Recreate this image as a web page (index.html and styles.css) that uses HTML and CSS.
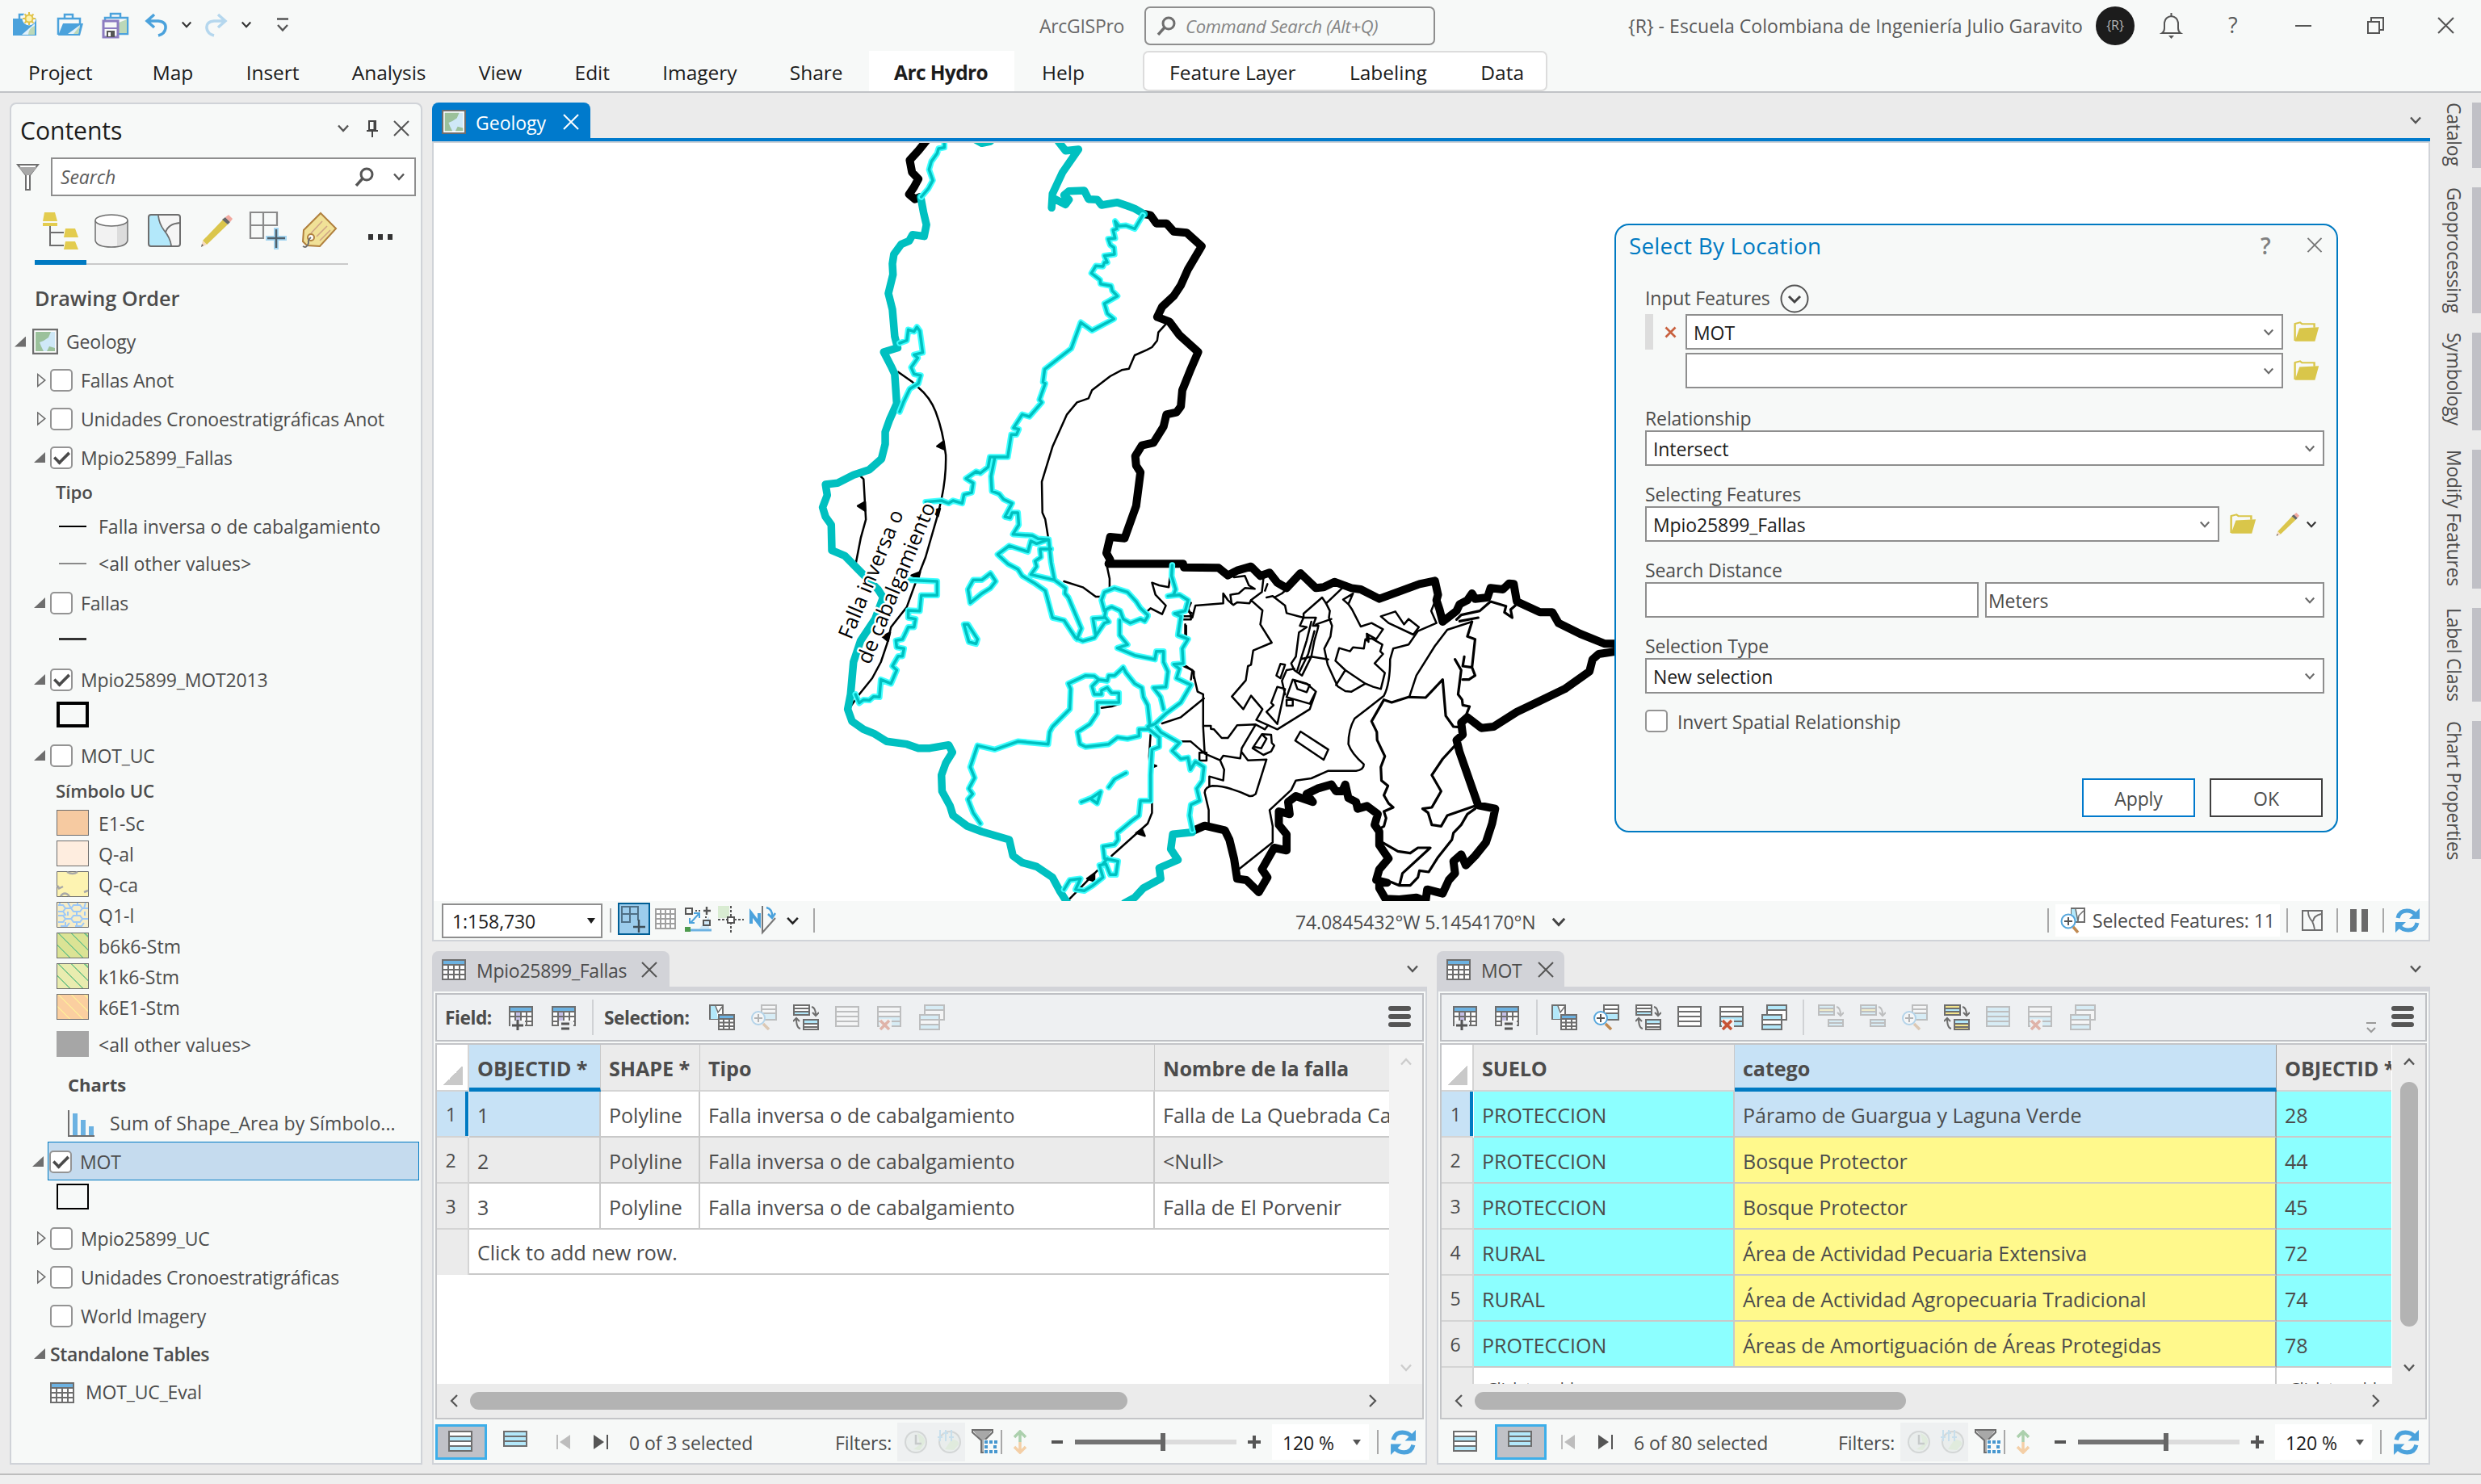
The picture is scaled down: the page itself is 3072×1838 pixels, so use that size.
FILE: index.html
```html
<!DOCTYPE html>
<html lang="en">
<head>
<meta charset="utf-8">
<title>ArcGISPro</title>
<link rel="stylesheet" href="styles.css">
</head>
<body>
<svg class="defs" width="0" height="0" aria-hidden="true">
  <defs>
    <symbol id="chev" viewBox="0 0 16 10"><path d="M2 1.5 8 8 14 1.5" fill="none" stroke="currentColor" stroke-width="2.4"/></symbol>
    <symbol id="x" viewBox="0 0 20 20"><path d="M1 1 19 19M19 1 1 19" fill="none" stroke="currentColor" stroke-width="2"/></symbol>
    <symbol id="xb" viewBox="0 0 20 20"><path d="M2 2 18 18M18 2 2 18" fill="none" stroke="currentColor" stroke-width="3.6"/></symbol>
    <symbol id="caret" viewBox="0 0 10 7"><path d="M0 0H10L5 7Z" fill="currentColor"/></symbol>
    <symbol id="mag" viewBox="0 0 24 24"><circle cx="15" cy="9" r="7" fill="none" stroke="currentColor" stroke-width="3"/><path d="M10 14 2 23" stroke="currentColor" stroke-width="3.4"/></symbol>
    <symbol id="mapico" viewBox="0 0 32 32"><path d="M1 1H31V31H1Z" fill="#fff" stroke="#6e6e6e" stroke-width="2.5"/><path d="M4 4H28V28H4Z" fill="#cfe8f7"/><path d="M4 4H23L20 11 14 15 9 17 11 22 14 28H4ZM18 28 21 22 28 24V28Z" fill="#9bc19b"/></symbol>
    <symbol id="open" viewBox="0 0 40 40"><path d="M1 5 10 2 13 5H32V12M2 5V37" fill="none" stroke="#d9c64a" stroke-width="3"/><path d="M9 13 39 11 33 38H2Z" fill="#d9c64a"/></symbol>
    <symbol id="pencil" viewBox="0 0 40 40"><path d="M3 32 28 6 34 12 8 37Z" fill="#dbc64c"/><path d="M3 32 1 40 8 37Z" fill="#f6d9bd"/><path d="M1 40 2 36 4 38Z" fill="#666"/><path d="M27 6 31 3 37 9 34 12Z" fill="#666"/><path d="M31 3 35 0 40 5 37 9Z" fill="#f2a9a0"/></symbol>
    <symbol id="tbl" viewBox="0 0 30 26"><path d="M1 1H29V25H1Z" fill="#fff"/><path d="M1 1H29V7H1Z" fill="#6cb2e2"/><path d="M1 1H29V25H1ZM1 7H29M1 13H29M1 19H29M8 7V25M15 7V25M22 7V25" fill="none" stroke="#6e6e6e" stroke-width="2"/></symbol>
    <symbol id="fieldadd" viewBox="0 0 32 32"><path d="M1 3H29V26H1Z" fill="#fff"/><path d="M8 9H14V20H8Z" fill="#c5bfe6"/><path d="M1 3H29V9H1Z" fill="#6cb2e2"/><path d="M1 3H29V26H1ZM1 9H29M1 15H29M1 21H29M8 9V26M15 9V26M22 9V26" fill="none" stroke="#6e6e6e" stroke-width="2"/><path d="M2 20H20V32H2Z" fill="#eef0f2"/><path d="M4 26H18M11 19V32" stroke="#555" stroke-width="3"/></symbol>
    <symbol id="fieldcalc" viewBox="0 0 32 32"><path d="M1 3H29V26H1Z" fill="#fff"/><path d="M8 9H14V20H8Z" fill="#c5bfe6"/><path d="M1 3H29V9H1Z" fill="#6cb2e2"/><path d="M1 3H29V26H1ZM1 9H29M1 15H29M1 21H29M8 9V26M15 9V26M22 9V26" fill="none" stroke="#6e6e6e" stroke-width="2"/><path d="M9 20H27V32H9Z" fill="#eef0f2"/><path d="M12 24H22M12 30H22" stroke="#555" stroke-width="3"/></symbol>
    <symbol id="selattr" viewBox="0 0 32 32"><path d="M1 1H17V18H1Z" fill="#fff" stroke="#6e6e6e" stroke-width="2"/><path d="M2 2H8L11 18H2Z" fill="#b3e8fa"/><path d="M8 2 11 10 17 2" fill="none" stroke="#6e6e6e" stroke-width="1.5"/><path d="M11 12H31V31H11Z" fill="#fff"/><path d="M12 13H31V18H12Z" fill="#6cb2e2"/><path d="M12 13H31V31H12ZM12 18H31M12 22.500H31M12 27H31M18 18V31M25 18V31" fill="none" stroke="#6e6e6e" stroke-width="2"/></symbol>
    <symbol id="selzoom" viewBox="0 0 32 32"><path d="M13 1H31V19H13Z" fill="#fff" stroke="#6e6e6e" stroke-width="2"/><path d="M14 12H30V18H14Z" fill="#b3e8fa"/><path d="M13 6H31M13 11H31" stroke="#6e6e6e" stroke-width="2"/><circle cx="9" cy="17" r="8" fill="#fff" stroke="#55a6dc" stroke-width="2"/><path d="M9 12V22M4 17H14" stroke="#555" stroke-width="2"/><path d="M15 24 22 31" stroke="#c08a52" stroke-width="3.500"/></symbol>
    <symbol id="selswitch" viewBox="0 0 32 32"><path d="M1 1H20V13H1Z" fill="#fff" stroke="#6e6e6e" stroke-width="2"/><path d="M2 9H19V12H2Z" fill="#b3e8fa"/><path d="M1 5H20M1 9H20" stroke="#6e6e6e" stroke-width="2"/><path d="M13 19H31V31H13Z" fill="#fff" stroke="#6e6e6e" stroke-width="2"/><path d="M14 20H30V23H14Z" fill="#b3e8fa"/><path d="M13 24H31M13 28H31" stroke="#6e6e6e" stroke-width="2"/><path d="M23 3Q28 4 28 13M24 10 28 14 32 10M9 30Q4 29 4 18M0 21 4 17 8 21" fill="none" stroke="#6e6e6e" stroke-width="2"/></symbol>
    <symbol id="selyellow" viewBox="0 0 32 32"><path d="M1 1H20V13H1Z" fill="#f4e58c" stroke="#6e6e6e" stroke-width="2"/><path d="M2 6H19V9H2Z" fill="#b3e8fa"/><path d="M13 19H31V31H13Z" fill="#b3e8fa" stroke="#6e6e6e" stroke-width="2"/><path d="M14 25H30V30H14Z" fill="#f4e58c"/><path d="M1 5H20M1 9H20M13 24H31M13 28H31" stroke="#6e6e6e" stroke-width="2"/><path d="M23 3Q28 4 28 13M24 10 28 14 32 10M9 30Q4 29 4 18M0 21 4 17 8 21" fill="none" stroke="#6e6e6e" stroke-width="2"/></symbol>
    <symbol id="selre" viewBox="0 0 32 32"><path d="M1 1H20V13H1Z" fill="#b3e8fa" stroke="#6e6e6e" stroke-width="2"/><path d="M2 6H19V9H2Z" fill="#f4e58c"/><path d="M13 19H31V27H13Z" fill="#b3e8fa" stroke="#6e6e6e" stroke-width="2"/><path d="M1 5H20M1 9H20M13 23H31" stroke="#6e6e6e" stroke-width="2"/><path d="M23 3Q28 4 28 13M24 10 28 14 32 10" fill="none" stroke="#6e6e6e" stroke-width="2"/></symbol>
    <symbol id="rows" viewBox="0 0 32 32"><path d="M1 3H29V27H1Z" fill="#fff"/><path d="M1 3H29V27H1ZM1 9H29M1 15H29M1 21H29" fill="none" stroke="#6e6e6e" stroke-width="2"/></symbol>
    <symbol id="rowsblue" viewBox="0 0 32 32"><path d="M1 3H29V27H1ZM1 9H29M1 15H29M1 21H29" fill="#b3e8fa" stroke="#6e6e6e" stroke-width="2"/></symbol>
    <symbol id="rowsdel" viewBox="0 0 32 32"><path d="M1 3H29V27H1Z" fill="#fff"/><path d="M1 15H29V27H1Z" fill="#b3e8fa"/><path d="M1 3H29V27H1ZM1 9H29M1 15H29M1 21H29" fill="none" stroke="#6e6e6e" stroke-width="2"/><path d="M3 18H18V32H3Z" fill="#eef0f2"/><path d="M4 20 15 31M15 20 4 31" stroke="#c75335" stroke-width="3.500"/></symbol>
    <symbol id="rowscopy" viewBox="0 0 32 32"><path d="M7 1H31V19H7Z" fill="#fff" stroke="#6e6e6e" stroke-width="2"/><path d="M8 2H30V6H8Z" fill="#b3e8fa"/><path d="M7 7H31" stroke="#6e6e6e" stroke-width="2"/><path d="M1 13H25V31H1Z" fill="#fff"/><path d="M1 13H25V19H1ZM1 25H25V31H1Z" fill="#b3e8fa"/><path d="M1 13H25V31H1ZM1 19H25M1 25H25" fill="none" stroke="#6e6e6e" stroke-width="2"/></symbol>
    <symbol id="ham" viewBox="0 0 28 26"><path d="M3 3H25M3 13H25M3 23H25" stroke="#555" stroke-width="6" stroke-linecap="round"/></symbol>
    <symbol id="allrows" viewBox="0 0 30 26"><path d="M1 1H29V25H1Z" fill="#fff"/><path d="M1 7H29V13H1ZM1 19H29V25H1Z" fill="#b3e8fa"/><path d="M1 1H29V25H1ZM1 7H29M1 13H29M1 19H29" fill="none" stroke="#6e6e6e" stroke-width="2"/></symbol>
    <symbol id="selrows" viewBox="0 0 30 26"><path d="M1 1H29V19H1ZM1 7H29M1 13H29" fill="#b3e8fa" stroke="#6e6e6e" stroke-width="2"/></symbol>
    <symbol id="first" viewBox="0 0 18 18"><path d="M1 0V18" stroke="#bdbdbd" stroke-width="2"/><path d="M17 0V18L4 9Z" fill="#bdbdbd"/></symbol>
    <symbol id="next" viewBox="0 0 18 18"><path d="M17 0V18" stroke="#555" stroke-width="2"/><path d="M0 0V18L13 9Z" fill="#555"/></symbol>
    <symbol id="clock" viewBox="0 0 30 30"><circle cx="15" cy="15" r="13" fill="#e9edec" stroke="#d3d6d6" stroke-width="2"/><path d="M17 4Q27 8 26 16L20 25 12 24 20 18Z" fill="#e0ebdd"/><path d="M15 6V17H22" fill="none" stroke="#c6caca" stroke-width="2.500"/></symbol>
    <symbol id="range" viewBox="0 0 30 30"><circle cx="15" cy="15" r="13" fill="#e9edec" stroke="#d3d6d6" stroke-width="2"/><path d="M17 12Q27 12 26 18L20 25 9 24Z" fill="#e0ebdd"/><path d="M3 0V14M10 0V14M17 0V14M0 9H6M7 4H13M14 9H20" stroke="#c8dfec" stroke-width="2"/></symbol>
    <symbol id="filttab" viewBox="0 0 32 32"><path d="M1 1H26L16 14V30H12V14Z" fill="#a8a8a8"/><path d="M1 1H26V4L16 14V29H12V14L1 4Z" fill="none" stroke="#6e6e6e" stroke-width="2"/><path d="M15 13H32V32H15Z" fill="#f7f9f8"/><path d="M16 16H32M16 22H20M27 22H32M16 28H32" stroke="#4797cf" stroke-width="4" stroke-dasharray="4 2"/></symbol>
    <symbol id="updown" viewBox="0 0 18 30"><path d="M9 15V3M2 9 9 2 16 9" fill="none" stroke="#acd0ad" stroke-width="3.500"/><path d="M9 15V27M2 21 9 28 16 21" fill="none" stroke="#f4cfa6" stroke-width="3.500"/></symbol>
    <symbol id="refresh" viewBox="0 0 32 32"><path d="M4 13Q6 4 15 4 22 4 26 9" fill="none" stroke="#4ba2dc" stroke-width="5"/><path d="M31 1V14H18Z" fill="#4ba2dc"/><path d="M28 19Q26 28 17 28 10 28 6 23" fill="none" stroke="#4ba2dc" stroke-width="5"/><path d="M1 31V18H14Z" fill="#4ba2dc"/></symbol>
    <symbol id="zoomsel" viewBox="0 0 32 32"><path d="M14 1H30V18H14Z" fill="#fff" stroke="#6e6e6e" stroke-width="2"/><path d="M14 2H20L22 17H14Z" fill="#b3e8fa"/><path d="M19 2 22 17 23 10 29 4" fill="none" stroke="#6e6e6e" stroke-width="1.500"/><circle cx="10" cy="17" r="8.500" fill="#fff" stroke="#55a6dc" stroke-width="2"/><path d="M10 12V22M5 17H15" stroke="#555" stroke-width="2"/><path d="M16 24 22 31" stroke="#c08a52" stroke-width="3.500"/></symbol>
  </defs>
</svg>

<div class="app">
  <header class="titlebar">
    <div class="quick">
      <svg width="31" height="31" viewBox="0 0 31 31"><path d="M1 8H30V29H1Z" fill="#4ba2dc"/><path d="M9 8V3H15" fill="none" stroke="#4ba2dc" stroke-width="2.500"/><path d="M12 28 28 14V28Z" fill="#e2f1fa"/><path d="M20 28Q20 20 28 17V28Z" fill="#bcd8b8"/><circle cx="21" cy="8" r="8.500" fill="#f7f9f8"/><path d="M21 0V16M13 8H29M15.500 2.500 26.500 13.500M26.500 2.500 15.500 13.500" stroke="#e0c34a" stroke-width="2"/><circle cx="21" cy="8" r="4.500" fill="#fdf3b0" stroke="#e0c34a" stroke-width="2"/></svg>
      <svg width="32" height="31" viewBox="0 0 32 31"><path d="M1 28V8H28V15M9 8V3H19V8" fill="none" stroke="#4ba2dc" stroke-width="2.500"/><path d="M7 14H32L28 29H1Z" fill="#4ba2dc"/><path d="M13 27 28 16 26 27Z" fill="#e2f1fa"/><path d="M20 27 28 17 26 27Z" fill="#bcd8b8"/></svg>
      <svg width="33" height="33" viewBox="0 0 33 33"><path d="M3 8H31V28H3ZM10 8V3H22V8" fill="#f7f9f8" stroke="#4ba2dc" stroke-width="2.500"/><path d="M20 14 30 10V27H20Z" fill="#bcd8b8"/><path d="M1 12H19V32H1Z" fill="#f7f9f8" stroke="#8c7cc0" stroke-width="3"/><path d="M1 21H19" stroke="#8c7cc0" stroke-width="2"/><path d="M5 24H15V32H5Z" fill="#555"/><path d="M7 26H10V31H7Z" fill="#fff"/></svg>
      <svg width="28" height="28" viewBox="0 0 28 28"><path d="M11 1 2 9 11 17M3 9H16Q26 10 25 18 24 25 16 27" fill="none" stroke="#4ba2dc" stroke-width="3.500"/></svg>
      <svg class="dk" width="14" height="9"><use href="#chev"/></svg>
      <svg width="28" height="28" viewBox="0 0 28 28"><path d="M17 1 26 9 17 17M25 9H12Q2 10 3 18 4 25 12 27" fill="none" stroke="#b5d7ee" stroke-width="3.500"/></svg>
      <svg class="dk" width="14" height="9"><use href="#chev"/></svg>
      <svg width="16" height="18" viewBox="0 0 16 18"><path d="M1 1.500H15M2 9 8 15.500 14 9" fill="none" stroke="#555" stroke-width="2.400"/></svg>
    </div>
    <div class="appname">ArcGISPro</div>
    <div class="cmd"><svg width="24" height="24"><use href="#mag"/></svg><i>Command Search (Alt+Q)</i></div>
    <div class="account">
      <span class="org">{R} - Escuela Colombiana de Ingeniería Julio Garavito</span>
      <span class="avatar">{R}</span>
      <svg width="27" height="32" viewBox="0 0 27 32"><path d="M2 25Q5 23 5 19V12Q6 5 13.500 4 21 5 22 12V19Q22 23 25 25ZM13.500 4V0" fill="none" stroke="#555" stroke-width="2"/><path d="M10 28H17L13.500 32Z" fill="#555"/></svg>
      <span class="q">?</span>
      <svg width="20" height="4"><path d="M0 2H20" stroke="#555" stroke-width="2"/></svg>
      <svg width="21" height="21" viewBox="0 0 21 21"><path d="M1 6H15V20H1ZM5 6V1H20V16H15" fill="none" stroke="#555" stroke-width="2"/></svg>
      <svg width="21" height="21" class="gr"><use href="#x"/></svg>
    </div>
  </header>

  <nav class="ribbon">
    <span class="t first">Project</span><span class="t">Map</span><span class="t">Insert</span><span class="t">Analysis</span><span class="t">View</span><span class="t">Edit</span><span class="t">Imagery</span><span class="t">Share</span><span class="t on">Arc Hydro</span><span class="t help">Help</span>
    <div class="ctx"><span class="t">Feature Layer</span><span class="t">Labeling</span><span class="t">Data</span></div>
  </nav>

  <main class="work">
    <aside class="contents">
      <div class="phead"><h2>Contents</h2>
        <svg class="gr" width="16" height="10"><use href="#chev"/></svg>
        <svg width="14" height="21" viewBox="0 0 14 21"><path d="M3 1H11V12H3ZM9.500 1V12M0 13H14M7 13V21" fill="none" stroke="#444" stroke-width="2"/></svg>
        <svg class="gr" width="20" height="20"><use href="#x"/></svg>
      </div>
      <div class="srow">
        <svg width="27" height="33" viewBox="0 0 27 33"><path d="M1 1H26L16 14V32H11V14Z" fill="#fff" stroke="#6e6e6e" stroke-width="2"/><path d="M2 4H25L16 14H11Z" fill="#a8a8a8"/></svg>
        <div class="search"><i>Search</i><svg class="gr" width="24" height="24"><use href="#mag"/></svg><svg class="gr" width="16" height="10"><use href="#chev"/></svg></div>
      </div>
      <div class="modes">
        <svg width="45" height="46" viewBox="0 0 45 46"><path d="M2 0H15L18 11H0ZM0 13H18V17H0ZM28 20H40L44 31H26ZM28 36H40L44 46H26Z" fill="#e3cc4f"/><path d="M9 17V41H26M9 25H26" fill="none" stroke="#6e6e6e" stroke-width="2"/></svg>
        <svg width="42" height="42" viewBox="0 0 42 42"><path d="M1 8V33Q3 41 21 41 39 41 41 33V8" fill="#f2f2f2"/><path d="M28 12H41V35Q36 40 28 40Z" fill="#dcdcdc"/><path d="M1 8V33Q3 41 21 41 39 41 41 33V8" fill="none" stroke="#6e6e6e" stroke-width="1.500"/><ellipse cx="21" cy="8" rx="20" ry="7" fill="#fff" stroke="#6e6e6e" stroke-width="1.500"/></svg>
        <svg width="42" height="42" viewBox="0 0 42 42"><rect x="1" y="1" width="39" height="39" rx="3" fill="#f5f5f5"/><path d="M2 2H13Q14 12 20 20 28 30 29 39H2Z" fill="#b3e8fa"/><path d="M13 2Q14 12 20 20 28 30 29 39M40 11Q25 12 22 23" fill="none" stroke="#6e6e6e" stroke-width="1.800"/><rect x="1" y="1" width="39" height="39" rx="3" fill="none" stroke="#6e6e6e" stroke-width="2"/></svg>
        <svg width="40" height="40"><use href="#pencil"/></svg>
        <svg width="46" height="47" viewBox="0 0 46 47"><path d="M1 1H34V17H1ZM17 1V33H1V17M34 17V1" fill="none" stroke="#8a8a8a" stroke-width="2.200"/><path d="M33 20V47M20 33H46" stroke="#a5d6f2" stroke-width="6"/><path d="M33 22V45M22 33H44" stroke="#4f5f6a" stroke-width="2.500"/></svg>
        <svg width="44" height="45" viewBox="0 0 44 45"><path d="M23 1 42 20 22 42 6 41 1 36 2 22Z" fill="#f1e197" stroke="#b0803e" stroke-width="2"/><path d="M25 11 11 26M31 17 18 30M35 22 22 35" stroke="#cfa586" stroke-width="1.600"/><circle cx="11" cy="31" r="4" fill="#fff" stroke="#b0803e" stroke-width="2"/><path d="M11 31Q7 34 8 38 6 45 1 42" fill="none" stroke="#6e6e6e" stroke-width="2"/></svg>
        <svg width="32" height="7" viewBox="0 0 32 7"><path d="M0 0H6V7H0ZM12 0H18V7H12ZM24 0H30V7H24Z" fill="#333"/></svg>
      </div>
      <div class="modeline"></div>
      <div class="tree">
        <div class="r hd">Drawing Order</div>
        <div class="r geo"><b class="ar open"></b><svg width="32" height="32"><use href="#mapico"/></svg><span>Geology</span></div>
        <div class="r lay"><b class="ar"></b><b class="cb"></b>Fallas Anot</div>
        <div class="r lay"><b class="ar"></b><b class="cb"></b>Unidades Cronoestratigráficas Anot</div>
        <div class="r lay"><b class="ar open"></b><b class="cb ck"></b>Mpio25899_Fallas</div>
        <div class="r sub h40">Tipo</div>
        <div class="r sy h43"><b class="ln"></b>Falla inversa o de cabalgamiento</div>
        <div class="r sy"><b class="ln g"></b>&lt;all other values&gt;</div>
        <div class="r lay h50"><b class="ar open"></b><b class="cb"></b>Fallas</div>
        <div class="r sy h40"><b class="ln d"></b></div>
        <div class="r lay h60"><b class="ar open"></b><b class="cb ck"></b>Mpio25899_MOT2013</div>
        <div class="r sy h28"><b class="sw thick"></b></div>
        <div class="r lay muc"><b class="ar open"></b><b class="cb"></b>MOT_UC</div>
        <div class="r sub h40">Símbolo UC</div>
        <div class="r sy h38"><b class="sw c1"></b>E1-Sc</div>
        <div class="r sy h38"><b class="sw c2"></b>Q-al</div>
        <div class="r sy h38"><svg class="sws" width="40" height="32" viewBox="0 0 40 32"><path d="M.5.500H39.500V31.500H.5Z" fill="#fdf3b1" stroke="#6e6e6e"/><path d="M13 1Q20 5 26 1M1 18 4 22M2 22 8 19M5 31Q10 24 16 31M34 26 39 24" fill="none" stroke="#a8a8a8" stroke-width="2.500"/></svg>Q-ca</div>
        <div class="r sy h38"><svg class="sws" width="40" height="32" viewBox="0 0 40 32"><path d="M.5.500H39.500V31.500H.5Z" fill="#f6edc8" stroke="#6e6e6e"/><path d="M2 4H8L11 8 8 12H2M11 8H18L21 4H29L32 8 29 12H21L18 8M32 8H39M2 17H8L11 21 8 25H2M8 12 11 16 8 17M11 21H18L21 17H29L32 21 29 25H21L18 21M32 21H39M5 30H13L16 26M23 30H31L34 26M14 12V17M35 12V17M4 1V4M14 1 18 8M26 1V4M36 1 34 8M25 12V17M11 25V30M25 25V30" fill="none" stroke="#9cc8f8" stroke-width="2"/></svg>Q1-l</div>
        <div class="r sy h38"><b class="sw hx c3"></b>b6k6-Stm</div>
        <div class="r sy h38"><b class="sw hx c4"></b>k1k6-Stm</div>
        <div class="r sy h38"><b class="sw hx c5"></b>k6E1-Stm</div>
        <div class="r sy other"><b class="sw c6"></b>&lt;all other values&gt;</div>
        <div class="r charts">Charts</div>
        <div class="r chart"><svg width="33" height="33" viewBox="0 0 33 33"><path d="M6 4H12V31H6ZM16 12H22V31H16ZM26 20H32V31H26Z" fill="#6cb2e2"/><path d="M1 0V32H33" fill="none" stroke="#6e6e6e" stroke-width="2"/></svg>Sum of Shape_Area by Símbolo...</div>
        <div class="r lay sel"><b class="ar open"></b><b class="cb ck"></b>MOT</div>
        <div class="r sy h40"><b class="sw thin"></b></div>
        <div class="r lay muc2"><b class="ar"></b><b class="cb"></b>Mpio25899_UC</div>
        <div class="r lay"><b class="ar"></b><b class="cb"></b>Unidades Cronoestratigráficas</div>
        <div class="r lay"><b class="ar none"></b><b class="cb"></b>World Imagery</div>
        <div class="r lay bold"><b class="ar open"></b>Standalone Tables</div>
        <div class="r eval"><svg width="30" height="26"><use href="#tbl"/></svg>MOT_UC_Eval</div>
      </div>
    </aside>

    <section class="center">
      <div class="tabs"><div class="tab maptab"><svg width="30" height="30"><use href="#mapico"/></svg><span>Geology</span><svg width="20" height="20"><use href="#x"/></svg></div><svg class="gr" width="16" height="10"><use href="#chev"/></svg></div>
      <div class="mappane">
        <svg class="map" viewBox="537 177 2470 939">
          <g class="thin">
            <g transform="translate(980 170) scale(.35714 .33333)">
              <path d="M370 872 420 910 440 930Q480 965 500 1020 525 1090 535 1180 537 1260 520 1345L508 1400 465 1560 432 1650 400 1745 345 1820 332 1880 310 1950 280 2010 235 2070 205 2115"/>
              <path d="M240 1260 250 1270 258 1420 240 1490 222 1590"/>
              <path d="M1300 692 1272 725 1268 755 1250 780 1232 790 1190 810 1170 860 1145 865 1105 888 1042 940 1030 970 990 985 955 1030 930 1090 905 1150 868 1280 870 1395 880 1420 892 1500"/>
              <path class="f" d="M527 1130 505 1148 530 1160ZM255 1355 230 1370 256 1388ZM515 1380 490 1388 508 1408ZM446 1615 416 1628 440 1640ZM342 1840 315 1855 335 1872Z"/>
            </g>
            <g transform="translate(980 640) scale(.35714 .33333)">
              <path d="M945 240 1010 262 1055 297H1075M1092 175 1103 230V262M1312 225 1308 262 1275 255 1250 245 1262 290 1298 330 1285 362 1245 340 1235 350M1385 320 1372 350 1388 358M1350 370H1385V382H1360M1365 400V435M1360 555 1390 570 1385 605"/>
              <path d="M1075 710 1110 705 1138 695M1285 768 1350 745 1430 675M1245 810 1240 890 1250 1060V1100L1235 1140 1110 1260M1060 1315 960 1425"/>
              <path class="f" d="M1215 1160 1195 1175 1225 1186ZM1050 1325 1025 1345 1050 1355ZM1250 920 1265 926 1250 932Z"/>
            </g>
            <g transform="translate(1440 660) scale(.38265 .33333)">
              <path d="M78 270 88 300 95 315 105 270 195 262V225L210 250 228 268 240 258 280 262 285 250 322 288 315 340 352 408 292 437 285 490 275 495 268 548 223 608 260 655 285 605 322 655 302 695 370 730 475 655 495 590 465 560 420 545 400 610 475 635 495 590"/>
              <path d="M230 165 265 160 278 195 297 208 265 205 245 225 218 230 222 262M285 250 320 220 325 170M330 215 338 190M335 240 355 235 395 270 400 298 455 315 455 300 485 270 515 240 528 262 580 205M360 240 385 225 400 210"/>
              <path d="M455 315H495L485 345 503 345 500 360 490 400 480 460 450 530 425 510 415 485 430 460 440 370 465 350 443 345 455 315M495 340 545 320M450 468 480 460 535 470M435 510 465 400 480 330M490 365 470 450 440 520"/>
              <path d="M528 262 540 290 537 315 547 345 542 385 522 430 533 490 555 545 565 570 590 588 610 590 655 560 590 510 560 565M590 510 558 475 570 428 605 440 615 425 650 430 655 395 675 392 710 415 703 440 712 450 685 485 718 520 705 580 680 572 655 560M660 375V400M665 382V405"/>
              <path d="M615 225 583 248 600 265 612 285 640 348 675 335 712 358 690 395 660 375M615 225 600 265M705 310 752 292 780 340 795 320 828 350 810 378 730 335Z"/>
              <path d="M880 255 868 290 885 335 825 365 795 415 745 430 735 470Q735 560 715 605L660 655 620 690Q600 730 600 785 610 820 650 860 650 880 625 884H535L480 912 430 920 415 955 345 1030 355 1090V1150L245 1250"/>
              <path d="M1000 330 920 360 880 420 820 530 797 610"/>
              <path class="m" d="M715 620 740 630 795 610 850 612 905 545 915 680 940 720 960 722M715 620 675 700 692 740 693 770 718 830 705 870 707 920 728 940 715 975 730 1005 745 1020 715 1035 722 1060 715 1090 700 1100"/>
              <path class="m" d="M945 790 905 840 870 900 900 960 880 1000 870 1020 840 1025 858 1040 870 1085 900 1090 920 1050 1020 1010M1010 1025 985 1045 965 1085 940 1115 935 1140 890 1205 860 1260 830 1255 825 1280 800 1310 765 1310 775 1265 865 1170H825L800 1190 760 1183 710 1150M700 1290 740 1298 765 1310"/>
              <path class="m" d="M1000 330 985 385 1010 395 1000 500 970 495 975 460M945 470 965 510 955 600 968 620 970 640 992 645 980 680M1000 500 1010 530 990 545 970 545M960 328 1020 315M950 322 965 305 1025 290 1060 255 1110 272 1105 295 1130 315 1125 285 1140 270"/>
              <path d="M445 738 535 805 520 843 428 772ZM320 748 350 750 352 780 360 790 350 812 325 825 290 800ZM320 748 335 765 318 800 295 795M380 487 395 490 380 540 367 530ZM370 572 395 580 370 710 335 665 358 640 350 632ZM425 548 475 565 465 592 435 580ZM400 620H420V642H400ZM395 600 385 550 400 510 425 505"/>
              <path d="M130 600V720L135 820 185 845 195 828 250 838 255 800 300 712 240 715 210 762 190 762 165 730 155 728V717H130M255 815 275 845 335 842 300 970Q290 980 280 978 210 940 160 940 135 945 135 965L148 1030V1080M185 845 198 880 195 920 150 905V940M60 775H90L130 815M118 817H141V846H118ZM75 495 100 515V540M75 380V345M100 530 112 590 130 600M300 712 330 730 340 715"/>
            </g>
          </g>
          <g class="thick">
            <path transform="translate(980 170) scale(.35714 .33333)" d="M470 10 440 50 410 85 418 130 440 155 425 185 408 212 428 230 445 222M1222 285 1245 290 1265 320 1300 320 1325 350 1370 355 1422 405 1375 490 1350 550 1325 590 1285 630 1268 668 1310 685 1345 735 1410 798 1385 860 1355 940 1350 1000 1335 1022 1300 1030 1290 1075 1255 1135 1215 1145 1192 1185 1195 1220 1210 1245 1195 1370 1155 1490 1105 1485 1092 1545 1105 1570 1100 1585"/>
            <path transform="translate(1440 660) scale(.38265 .33333)" d="M-176 115H65L68 128 180 130 210 158 240 140 285 125 315 160 345 148 370 185 400 205 445 150 495 205 520 202 555 182 610 205 640 210 700 245 830 190 880 178 890 230 885 250 895 285 905 330 950 290 960 265 985 250 1000 225 1010 245 1050 240 1060 205 1100 210 1120 188 1135 190 1145 255 1220 295H1260L1280 335 1350 375 1430 412 1470 412M1470 440 1410 450 1390 470 1380 515 1300 580 1200 635 1145 665 1070 720 1030 725 985 685 965 705 970 750 950 770 960 815 1020 1012 1075 1025 1065 1080 1045 1150 1010 1200 980 1235 965 1195 940 1220 945 1265 925 1290 905 1340 855 1325 850 1368 820 1355 765 1362 720 1360 700 1320V1298L725 1300 690 1290 700 1250 730 1210 700 1160V1110L685 1085 695 1045 660 1015 630 1025 625 1000 600 985 590 935 580 960 560 960 545 935 500 950 465 970 485 1000 430 978 405 1000 410 1045 375 1035V1085L400 1120V1180L360 1170 345 1200 320 1250 338 1280 310 1335 270 1290 240 1285 230 1210 215 1140 200 1105 135 1088 95 1108"/>
          </g>
          <g class="teal">
            <path transform="translate(980 170) scale(.35714 .33333)" d="M448 222 458 280 468 325 460 368 420 362 408 385 380 398 355 435 350 470 352 510 336 580 350 640 358 740 368 782 320 798 345 850 358 880 365 990 340 1050 325 1095V1140L312 1195 270 1235 215 1255 160 1285 118 1290 124 1330 108 1375 118 1410 138 1440 140 1535 185 1555 240 1615 300 1680 318 1710 290 1790 240 1870 215 1950 205 2070 195 2125 210 2170 250 2200 285 2215 330 2245 400 2255 440 2270 480 2270 545 2258 558 2285 535 2325 520 2370 522 2430 550 2485 560 2520 610 2560 660 2580 755 2610 768 2670 800 2695 850 2710 905 2750 930 2800 960 2850"/>
            <path transform="translate(980 170) scale(.35714 .33333)" d="M640 10 660 22 690 15M925 15 950 50 995 45 940 130 905 210 902 262M905 225 950 250 962 232 945 215 962 200 1015 198 1030 230 1060 232 1075 252 1130 242 1165 255 1190 265 1222 285M1390 2582 1322 2590 1315 2645 1340 2685 1275 2715 1280 2755 1220 2790 1190 2825 1155 2845"/>
          </g>
          <g>
            <g class="halo"><use href="#selshape"/></g>
            <g class="core"><g id="selshape">
              <path d="M530 25V38L510 42 505 60 485 90 477 120 490 160 475 190 450 222M1218 290 1190 340 1160 328 1135 330 1122 312 1128 340 1115 345 1122 375 1098 378 1105 400 1118 410 1120 435 1085 440 1095 465 1085 465 1080 480 1055 478 1040 505 1070 530 1072 545 1108 552 1112 570 1130 590 1085 618 1095 655 1118 675 1042 718 1003 688 970 785 878 862 872 910 880 915 860 975 868 985 825 1038 800 1030 770 1080 788 1085 780 1105 762 1105 750 1188H688L682 1225 655 1248 640 1242 605 1268 630 1285 625 1320 598 1328 592 1360 560 1350 545 1360 520 1350 465 1355M705 1190 692 1260 695 1315 720 1325 735 1345 765 1360 740 1410 758 1415 765 1395 785 1395 788 1440 768 1475 835 1480 855 1492 890 1495M375 765 400 755 405 715 425 722 435 705 445 720 455 800 425 808 438 820 415 855 425 880 448 885 440 915 410 935 390 980 375 1020" transform="translate(980 170) scale(.35714 .33333)"/>
              <path d="M890 85 850 100 830 90 820 130 755 108 715 140 750 175 785 195 800 220 840 245 880 275 905 375 945 385 985 450 1010 462 1050 450 1085 395 1100 390 1085 370M892 85 900 170 912 235 950 265 948 285 960 300 1005 415 990 455M900 120H862L865 150 845 165 850 185 830 215 912 235M400 235 505 240V292H450L445 350 405 348V375L430 380 425 410H405L385 455 362 460 365 485 390 490 385 518H370L350 555 365 570 345 620 310 605 305 670 285 668 270 682 250 680 235 692 222 660M620 320 612 270 630 235 660 235 690 210 708 240 690 265 660 285ZM598 400H612L645 455 640 472 615 465ZM1235 370 1225 388 1210 380 1175 395 1150 380 1140 350 1110 335 1090 345 1085 375 1045 378 1055 440M1085 350 1075 310 1085 280 1120 265 1165 280 1195 315 1210 340 1235 365M1138 385V440L1165 475 1130 488 1190 515 1260 530 1265 500H1290V540L1305 575 1298 632 1255 635 1280 670 1290 715M1320 180 1318 220 1332 270 1325 290 1305 295 1345 290 1375 310 1365 350 1328 360 1350 370 1340 440 1375 455 1355 490 1358 545 1325 548 1345 565 1335 600 1385 625 1350 690 1300 730 1260 770 1235 780"/>
              <path d="M1150 560 1160 580 1190 620 1215 635 1220 670 1235 700 1242 770 1235 790 1205 790V815L1165 825 1130 820 1100 845 1020 855 1000 845 992 800 1035 770 1060 730V690H1135V655L1110 655 1095 635 1075 645V660H1050L1042 630 1065 605 1050 592 1020 590 960 620 968 640 965 715 905 780 895 800 890 845 785 835 705 865 645 850 620 930 635 970 615 1010 628 1030 612 1050 630 1100 655 1140M1150 560 1120 590 1100 590 1095 610 1065 605M1240 790 1275 820V855L1250 865 1245 960V1055H1210L1205 1110 1180 1130 1130 1175 1132 1200 1120 1218 1080 1225 1085 1270 1132 1280 1125 1330H1105L1090 1290 1068 1295 1080 1340 1045 1370 1015 1390 985 1385 1002 1345 965 1350 945 1385M1265 780 1280 800 1345 840 1320 870 1350 900 1375 895 1383 940 1400 910 1430 930 1425 980 1405 1010 1415 1055 1385 1070 1380 1110 1390 1165M1160 952 1120 975 1100 1005M1005 1060 1040 1045 1072 1022 1060 1065 1040 1050M1095 1270 1080 1290"/>
            </g></g>
          </g>
          <g class="lbl"><text transform="translate(1054 793) rotate(-67.500)">Falla inversa o</text><text transform="translate(1077 824) rotate(-67.500)">de cabalgamiento</text></g>
        </svg>
        <div class="mapbar">
          <div class="scale"><span>1:158,730</span><svg width="10" height="7"><use href="#caret"/></svg></div>
          <b class="sep"></b>
          <div class="mb on"><svg width="34" height="34" viewBox="0 0 34 34"><path d="M1 1H21V10H1ZM11 1V20H1V10M21 10V18" fill="none" stroke="#4f6f86" stroke-width="2"/><path d="M22 17V33M15 26H30" stroke="#3f4f5a" stroke-width="2.400"/></svg></div>
          <svg class="mi" width="26" height="26" viewBox="0 0 26 26"><path d="M1 1H25V25H1ZM1 7H25M1 13H25M1 19H25M7 1V25M13 1V25M19 1V25" fill="#fff" stroke="#a0a0a0" stroke-width="2"/></svg>
          <svg class="mi2" width="34" height="32" viewBox="0 0 34 32"><path d="M18 27 30 12V27Z" fill="#cfe8f7"/><path d="M1 2H9V9H1ZM23 17H31V23H23Z" fill="none" stroke="#555" stroke-width="2"/><path d="M23 5H32M27 0V10" stroke="#555" stroke-width="2.400"/><path d="M7 20 18 8M11 8H18V14M6 14V20H12" fill="none" stroke="#4ba2dc" stroke-width="2"/><path d="M7 29H33" stroke="#6cb2e2" stroke-width="3"/><path d="M0 25H7V31H0Z" fill="#4d9a4d"/><path d="M13 5H21M26 12V16" stroke="#555" stroke-width="2" stroke-dasharray="2 2"/></svg>
          <svg class="mi3" width="32" height="34" viewBox="0 0 32 34"><path d="M0 0H14V15H0Z" fill="#d9ecd2"/><path d="M0 17H32M16 0V34" stroke="#555" stroke-width="2" stroke-dasharray="3 2"/><path d="M12 14H20V21H12Z" fill="#fff" stroke="#555" stroke-width="2"/></svg>
          <svg class="mi4" width="32" height="34" viewBox="0 0 32 34"><path d="M1 22V9L11 22V9" fill="none" stroke="#4ba2dc" stroke-width="4"/><path d="M15 0V33L31 15" fill="none" stroke="#777" stroke-width="2"/><path d="M20 2Q28 4 27 14M22 10 27 15 31 9" fill="none" stroke="#4ba2dc" stroke-width="2.500"/></svg>
          <svg class="mi5" width="17" height="11"><use href="#chev"/></svg>
          <b class="sep"></b>
          <span class="coord">74.0845432°W 5.1454170°N</span><svg class="cch" width="20" height="12"><use href="#chev"/></svg>
          <b class="sep"></b>
          <div class="selfeat"><svg width="32" height="32"><use href="#zoomsel"/></svg><span>Selected Features: 11</span></div>
          <b class="sep s2"></b>
          <svg width="26" height="26" viewBox="0 0 26 26"><path d="M1 1H25V25H1Z" fill="none" stroke="#6e6e6e" stroke-width="2"/><path d="M8 2Q8 9 13 14 15 18 16 24M24 5Q15 7 14 14" fill="none" stroke="#6e6e6e" stroke-width="1.800"/></svg>
          <b class="sep s3"></b>
          <svg width="23" height="28" viewBox="0 0 23 28"><path d="M0 0H8V28H0ZM14 0H22V28H14Z" fill="#6a6a6a"/></svg>
          <b class="sep s3"></b>
          <svg class="rf" width="32" height="32"><use href="#refresh"/></svg>
        </div>
        <div class="dialog">
          <div class="dh"><span>Select By Location</span><em>?</em><svg width="20" height="19"><use href="#x"/></svg></div>
          <div class="dl inp">Input Features <svg width="36" height="36" viewBox="0 0 36 36"><circle cx="18" cy="18" r="16.500" fill="none" stroke="#555" stroke-width="2"/><path d="M11 15 18 22 25 15" fill="none" stroke="#444" stroke-width="3"/></svg></div>
          <div class="dr"><b class="grip"></b><svg class="red" width="15" height="15"><use href="#xb"/></svg><div class="fld"><span>MOT</span><svg width="14" height="9"><use href="#chev"/></svg></div><svg class="fo" width="32" height="26" viewBox="0 0 40 40" preserveAspectRatio="none"><use href="#open"/></svg></div>
          <div class="dr two"><div class="fld"><span></span><svg width="14" height="9"><use href="#chev"/></svg></div><svg class="fo" width="32" height="26" viewBox="0 0 40 40" preserveAspectRatio="none"><use href="#open"/></svg></div>
          <div class="dl l52">Relationship</div>
          <div class="dr"><div class="fld"><span>Intersect</span><svg width="14" height="9"><use href="#chev"/></svg></div></div>
          <div class="dl">Selecting Features</div>
          <div class="dr"><div class="fld"><span>Mpio25899_Fallas</span><svg width="14" height="9"><use href="#chev"/></svg></div><svg class="fo f2" width="33" height="26" viewBox="0 0 40 40" preserveAspectRatio="none"><use href="#open"/></svg><svg class="pc" width="29" height="29"><use href="#pencil"/></svg><svg class="dkc" width="14" height="9"><use href="#chev"/></svg></div>
          <div class="dl">Search Distance</div>
          <div class="dr"><div class="fld dist"></div><div class="fld units"><span>Meters</span><svg width="14" height="9"><use href="#chev"/></svg></div></div>
          <div class="dl">Selection Type</div>
          <div class="dr"><div class="fld"><span>New selection</span><svg width="14" height="9"><use href="#chev"/></svg></div></div>
          <div class="inv"><b class="cb"></b><span>Invert Spatial Relationship</span></div>
          <div class="btns"><span class="ap">Apply</span><span>OK</span></div>
        </div>
      </div>

      <div class="tables">
        <section class="tp left">
          <div class="tabs"><div class="tab"><svg width="30" height="26"><use href="#tbl"/></svg><span>Mpio25899_Fallas</span><svg class="gr" width="20" height="20"><use href="#x"/></svg></div><svg class="gr" width="16" height="10"><use href="#chev"/></svg></div>
          <div class="tbody">
            <div class="tool tl"><strong>Field:</strong><svg><use href="#fieldadd"/></svg><svg><use href="#fieldcalc"/></svg><b class="vs"></b><strong>Selection:</strong><svg><use href="#selattr"/></svg><svg class="off"><use href="#selzoom"/></svg><svg><use href="#selswitch"/></svg><svg class="off"><use href="#rows"/></svg><svg class="off"><use href="#rowsdel"/></svg><svg class="off"><use href="#rowscopy"/></svg><i></i><svg class="ham"><use href="#ham"/></svg></div>
            <div class="gridbox">
              <div class="gmain">
                <div class="grid">
                  <div class="gr0 th"><b class="corner"></b><span class="act">OBJECTID *</span><span>SHAPE *</span><span>Tipo</span><span>Nombre de la falla</span></div>
                  <div class="gr0 cur"><b>1</b><span class="actc">1</span><span>Polyline</span><span>Falla inversa o de cabalgamiento</span><span>Falla de La Quebrada Ca</span></div>
                  <div class="gr0 alt"><b>2</b><span>2</span><span>Polyline</span><span>Falla inversa o de cabalgamiento</span><span>&lt;Null&gt;</span></div>
                  <div class="gr0"><b>3</b><span>3</span><span>Polyline</span><span>Falla inversa o de cabalgamiento</span><span>Falla de El Porvenir</span></div>
                  <div class="gr0 add"><b></b><span>Click to add new row.</span></div>
                </div>
                <div class="vsb dis"><svg class="up" width="16" height="10"><use href="#chev"/></svg><svg width="16" height="10"><use href="#chev"/></svg></div>
              </div>
              <div class="hsb"><svg width="10" height="16" viewBox="0 0 10 16"><path d="M9 1 2 8 9 15" fill="none" stroke="#555" stroke-width="2.200"/></svg><b class="thumb"></b><svg width="10" height="16" viewBox="0 0 10 16"><path d="M1 1 8 8 1 15" fill="none" stroke="#555" stroke-width="2.200"/></svg></div>
            </div>
            <div class="foot">
              <div class="fb on"><svg width="30" height="26"><use href="#allrows"/></svg></div><div class="fb"><svg width="30" height="26"><use href="#selrows"/></svg></div>
              <svg class="n1" width="18" height="18"><use href="#first"/></svg><svg class="n2" width="18" height="18"><use href="#next"/></svg>
              <span class="cnt">0 of 3 selected</span><span class="fil">Filters:</span>
              <div class="clk"><svg width="30" height="30"><use href="#clock"/></svg><svg width="30" height="30"><use href="#range"/></svg></div>
              <svg class="ft" width="32" height="32"><use href="#filttab"/></svg><b class="sep"></b><svg class="ud" width="18" height="30"><use href="#updown"/></svg>
              <svg class="zoom" width="260" height="24" viewBox="0 0 260 24"><path d="M0 12H14M243 12H259M251 4V20" stroke="#555" stroke-width="4"/><path d="M29 12H229" stroke="#dcdcdc" stroke-width="6"/><path d="M29 12H138" stroke="#737373" stroke-width="6"/><path d="M138 1V23" stroke="#666" stroke-width="6"/></svg>
              <div class="pct"><span>120 %</span><svg width="10" height="7"><use href="#caret"/></svg></div><b class="sep s4"></b><svg class="rf2" width="33" height="33"><use href="#refresh"/></svg>
            </div>
          </div>
        </section>

        <section class="tp right">
          <div class="tabs"><div class="tab"><svg width="30" height="26"><use href="#tbl"/></svg><span>MOT</span><svg class="gr" width="20" height="20"><use href="#x"/></svg></div><svg class="gr" width="16" height="10"><use href="#chev"/></svg></div>
          <div class="tbody">
            <div class="tool tr"><svg><use href="#fieldadd"/></svg><svg><use href="#fieldcalc"/></svg><b class="vs"></b><svg><use href="#selattr"/></svg><svg><use href="#selzoom"/></svg><svg><use href="#selswitch"/></svg><svg><use href="#rows"/></svg><svg><use href="#rowsdel"/></svg><svg><use href="#rowscopy"/></svg><b class="vs"></b><svg class="off"><use href="#selre"/></svg><svg class="off"><use href="#selre"/></svg><svg class="off"><use href="#selzoom"/></svg><svg><use href="#selyellow"/></svg><svg class="off"><use href="#rowsblue"/></svg><svg class="off"><use href="#rowsdel"/></svg><svg class="off"><use href="#rowscopy"/></svg><i></i><svg class="ovf" viewBox="0 0 12 14"><path d="M0 1H12M1 7 6 12 11 7" fill="none" stroke="#999" stroke-width="2"/></svg><svg class="ham"><use href="#ham"/></svg></div>
            <div class="gridbox">
              <div class="gmain">
                <div class="grid">
                  <div class="gr0 th"><b class="corner"></b><span>SUELO</span><span class="act">catego</span><span>OBJECTID *</span></div>
                  <div class="gr0 cur"><b>1</b><span>PROTECCION</span><span class="actc">Páramo de Guargua y Laguna Verde</span><span>28</span></div>
                  <div class="gr0"><b>2</b><span>PROTECCION</span><span>Bosque Protector</span><span>44</span></div>
                  <div class="gr0"><b>3</b><span>PROTECCION</span><span>Bosque Protector</span><span>45</span></div>
                  <div class="gr0"><b>4</b><span>RURAL</span><span>Área de Actividad Pecuaria Extensiva</span><span>72</span></div>
                  <div class="gr0"><b>5</b><span>RURAL</span><span>Área de Actividad Agropecuaria Tradicional</span><span>74</span></div>
                  <div class="gr0"><b>6</b><span>PROTECCION</span><span>Áreas de Amortiguación de Áreas Protegidas</span><span>78</span></div>
                  <div class="gr0 add2"><b></b><span>Click to add new row.</span><span>Click to add new row.</span></div>
                </div>
                <div class="vsb"><svg class="up" width="16" height="10"><use href="#chev"/></svg><b class="vthumb"></b><svg width="16" height="10"><use href="#chev"/></svg></div>
              </div>
              <div class="hsb"><svg width="10" height="16" viewBox="0 0 10 16"><path d="M9 1 2 8 9 15" fill="none" stroke="#555" stroke-width="2.200"/></svg><b class="thumb"></b><svg width="10" height="16" viewBox="0 0 10 16"><path d="M1 1 8 8 1 15" fill="none" stroke="#555" stroke-width="2.200"/></svg></div>
            </div>
            <div class="foot">
              <div class="fb"><svg width="30" height="26"><use href="#allrows"/></svg></div><div class="fb on"><svg width="30" height="26"><use href="#selrows"/></svg></div>
              <svg class="n1" width="18" height="18"><use href="#first"/></svg><svg class="n2" width="18" height="18"><use href="#next"/></svg>
              <span class="cnt">6 of 80 selected</span><span class="fil">Filters:</span>
              <div class="clk"><svg width="30" height="30"><use href="#clock"/></svg><svg width="30" height="30"><use href="#range"/></svg></div>
              <svg class="ft" width="32" height="32"><use href="#filttab"/></svg><b class="sep"></b><svg class="ud" width="18" height="30"><use href="#updown"/></svg>
              <svg class="zoom" width="260" height="24" viewBox="0 0 260 24"><path d="M0 12H14M243 12H259M251 4V20" stroke="#555" stroke-width="4"/><path d="M29 12H229" stroke="#dcdcdc" stroke-width="6"/><path d="M29 12H138" stroke="#737373" stroke-width="6"/><path d="M138 1V23" stroke="#666" stroke-width="6"/></svg>
              <div class="pct"><span>120 %</span><svg width="10" height="7"><use href="#caret"/></svg></div><b class="sep s4"></b><svg class="rf2" width="33" height="33"><use href="#refresh"/></svg>
            </div>
          </div>
        </section>
      </div>
    </section>

    <aside class="dock"><span class="k1">Catalog</span><span class="k2">Geoprocessing</span><span class="k3">Symbology</span><span class="k4">Modify Features</span><span class="k5">Label Class</span><span class="k6">Chart Properties</span></aside>
  </main>
  <footer class="bottom"></footer>
</div>
</body>
</html>
```

FILE: styles.css
```css
*, *::before, *::after { box-sizing: border-box; }
body { margin: 0; width: 3072px; height: 1838px; overflow: hidden; background: #ebebeb; color: #4c4c4c; font: 23px/1.36 "Open Sans", "Noto Sans", sans-serif; letter-spacing: -.1px; white-space: nowrap; }
svg { display: block; flex: none; overflow: visible; }
b, i, em, strong { display: block; }
.defs { position: absolute; }
.gr { color: #555; }
.dk { color: #333; }
.app { display: flex; flex-direction: column; height: 1838px; }

/* title bar */
.titlebar { height: 63px; background: #f7f9f8; display: flex; align-items: center; flex: none; }
.quick { width: 1287px; padding: 0 0 2px 15px; display: grid; grid-template-columns: 56px 56px 53px 44px 29px 45px 44px 16px; align-items: center; }
.quick svg { width: auto; justify-self: start; }
.appname { width: 130px; color: #6a6a6a; padding-top: 2px; letter-spacing: -.3px; }
.cmd { width: 360px; height: 48px; border: 2px solid #8e8e8e; border-radius: 7px; display: flex; align-items: center; gap: 12px; padding-left: 13px; color: #6e6e6e; }
.cmd i { font-size: 22px; color: #858585; letter-spacing: -.3px; padding-top: 2px; }
.account { margin-left: 239px; display: grid; grid-template-columns: 579px 80px 82px 85px 89px 87px 22px; align-items: center; color: #5a5a5a; }
.org { padding-top: 2px; letter-spacing: .05px; }
.avatar { width: 48px; height: 48px; border-radius: 24px; background: #1c1c1c; color: #b5b5b5; font-size: 16px; display: flex; align-items: center; justify-content: center; }
.q { font-size: 27px; padding-left: 2px; }

/* ribbon */
.ribbon { height: 52px; flex: none; background: #f7f9f8; border-bottom: 2px solid #c0c2c6; display: flex; font-size: 24.500px; letter-spacing: -.05px; color: #1c1c1c; }
.t { padding: 3px 32.700px 0; display: flex; align-items: center; height: 50px; }
.t.first { padding: 3px 41.500px 0 35px; }
.t.on { background: #fff; font-weight: 700; padding: 3px 31px 0; letter-spacing: -.6px; width: 180px; }
.t.help { width: 159px; padding-left: 34px; }
.ctx { width: 501px; height: 50px; border: 2px solid #dcdcdc; border-radius: 7px; background: #fff; display: flex; letter-spacing: 0; }
.ctx .t { height: 46px; padding: 3px 35.500px 0 31px; }

.work { height: 1710px; flex: none; padding-top: 12px; display: flex; }
.bottom { flex: 1; border-top: 2px solid #bdbdbd; background: #efefef; }

/* contents pane */
.contents { margin-left: 12px; width: 511px; height: 1687px; flex: none; background: #f7f9f8; border: 2px solid #d0d3d8; border-radius: 8px 8px 0 0; }
.phead { height: 66px; display: grid; grid-template-columns: 391px 37px 33px 20px; align-items: center; padding: 0 0 6px 12px; }
h2 { margin: 6px 0 0 -1px; font-size: 30.200px; font-weight: 400; color: #1c1c1c; line-height: 1.36; }
.srow { height: 48px; display: flex; align-items: center; padding-left: 7px; gap: 15px; }
.search { width: 452px; height: 48px; border: 2px solid #8e8e8e; background: #fff; display: grid; grid-template-columns: 364px 47px 16px; align-items: center; padding-left: 10px; }
.search i { color: #5c5c5c; padding-top: 2px; }
.modes { height: 79px; display: grid; grid-template-columns: 64px 66px 65px 61px 65px 82px 32px; align-items: center; padding: 6px 0 0 39px; }
.modes svg:last-child { margin-top: 16px; }
.modeline { height: 6px; margin: 0 0 0 29px; width: 388px; background: linear-gradient(#007ac2, #007ac2) 0 0/64px 6px no-repeat, linear-gradient(#cacaca, #cacaca) 0 100%/388px 2px no-repeat; }
.tree { padding-top: 17px; letter-spacing: -.15px; }
.r { display: flex; align-items: center; height: 48px; padding-top: 3px; }
.hd { height: 49px; padding: 0 0 0 29px; font-weight: 600; font-size: 25.300px; letter-spacing: -.1px; margin-bottom: 5px; }
.geo { padding: 0 0 0 4px; }
.geo span { padding-top: 2px; }
.geo svg { margin: 0 10px 0 8px; }
.lay { padding-left: 28px; height: 48px; }
.lay:nth-child(3) { height: 47px; }
.ar { width: 15px; height: 18px; margin: -2px 5px 0 0; background: #6e6e6e; flex: none; clip-path: polygon(4px 0, 15px 9px, 4px 18px, 4px 16px, 12.500px 9px, 5.500px 3px, 5.500px 16px, 4px 18px); }
.ar.open { width: 14px; height: 13px; margin-right: 6px; clip-path: polygon(100% 0, 100% 100%, 0 100%); }
.lay .ar:not(.open) { margin-right: 5px; }
.ar.none { visibility: hidden; }
.geo .ar.open { margin: 0; }
.cb { width: 28px; height: 28px; border: 2px solid #949494; border-radius: 5px; background: #fff; flex: none; margin-right: 12px; }
.lay .cb { margin-right: 10px; margin-top: -2px; }
.ck::after { content: ""; display: block; width: 21px; height: 12px; border: solid #4a4a4a; border-width: 0 0 4px 4px; transform: translate(2px, 4px) rotate(-45deg) scale(.9); }
.sub { padding: 0 0 0 55px; font-weight: 600; font-size: 22.300px; }
.h28 { height: 28px; } .h38 { height: 38px; } .h40 { height: 40px; } .h43 { height: 43px; } .h50 { height: 50px; } .h60 { height: 60px; }
.sy { padding-left: 56px; letter-spacing: 0; }
.ln { width: 34px; height: 2px; background: #000; margin: -2px 15px 0 3px; }
.ln.g { background: #8a8a8a; } .ln.d { height: 3px; background: #333; }
.sw { width: 40px; height: 32px; border: 1px solid #6e6e6e; margin: -3px 12px 0 0; flex: none; }
.sws { margin: -3px 12px 0 0; }
.thick { border: 4px solid #000; } .thin { border: 2px solid #000; }
.c1 { background: #f6caa1; } .c2 { background: #feeddf; } .c3 { background-color: #dbe395; color: #7cc68a; } .c4 { background-color: #e9ecaf; color: #7cc68a; } .c5 { background-color: #fbcfa0; color: #fdea9a; } .c6 { background: #a6a6a6; border: 0; }
.hx { background-image: repeating-linear-gradient(45deg, transparent 0 10px, currentColor 10px 11.500px); }
.muc { margin-top: 11px; height: 50px; }
.other { margin-top: 3px; }
.charts { margin-top: 5px; height: 44px; padding: 0 0 0 70px; font-weight: 700; font-size: 22px; letter-spacing: 0; }
.chart { padding-left: 70px; letter-spacing: .1px; }
.chart svg { margin-right: 19px; }
.sel { margin-left: 45px; width: 460px; padding-left: 0; background: #c5dbee; border: 1.500px solid #007ac2; }
.sel .ar { margin-left: -20px; }
.sel .cb { margin-left: 1px; }
.muc2 { margin-top: 7px; }
.bold { font-weight: 600; letter-spacing: -.35px; padding-top: 1px; }
.eval { height: 46px; padding-left: 48px; padding-top: 1px; }
.eval svg { margin-right: 14px; }

/* document tabs */
.center { margin-left: 12px; width: 2474px; flex: none; }
.tabs { height: 44px; display: flex; align-items: center; justify-content: space-between; padding-right: 10px; }
.tab { height: 44px; background: #d2d3d8; border-radius: 8px 8px 0 0; display: flex; align-items: center; padding: 2px 15px 0 12px; letter-spacing: -.25px; }
.tab span { margin: 4px 18px 0 13px; }
.maptab { background: #007acc; color: #fff; width: 196px; height: 46px; align-self: flex-start; padding-right: 0; }
.maptab span { margin: 3px 21px 0 12px; letter-spacing: 0; }

.mappane { position: relative; height: 995px; border: 2px solid #d0d3d8; border-top: 0; background: #f7f9f8; }
.mappane::before { content: ""; display: block; margin: 0 -2px; height: 6px; background: #007acc; border-bottom: 2px solid #d0d3d8; }
.map { width: 2470px; height: 939px; background: #fff; overflow: hidden; }
.map path { vector-effect: non-scaling-stroke; fill: none; stroke-linejoin: round; stroke-linecap: round; }
.thin path { stroke: #000; stroke-width: 2.500px; }
.thin .m { stroke-width: 3.200px; }
.thin .f { fill: #000; }
.thick path { stroke: #000; stroke-width: 10px; }
.map .thick { border: 0; }
.teal path { stroke: #00c0c0; stroke-width: 9.500px; }
.halo { stroke: #40ffff; stroke-width: 7.500px; }
.core { stroke: #00c0c0; stroke-width: 3.500px; }
#selshape path + path { transform: translate(980px, 640px) scale(.35714, .33333); }
.lbl { font: 25.700px "Open Sans", sans-serif; fill: #000; stroke: #fff; stroke-width: 5px; paint-order: stroke; stroke-linejoin: round; letter-spacing: 0; }

.mapbar { height: 48px; display: flex; align-items: center; padding-left: 10px; }
.scale { width: 199px; height: 43px; border: 2px solid #8e8e8e; background: #fff; display: flex; align-items: center; justify-content: space-between; padding: 0 7px 0 11px; color: #1c1c1c; }
.scale span { padding-top: 3px; }
.sep { width: 2px; height: 30px; background: #a8a8a8; margin-left: 9px; }
.mb { width: 40px; height: 40px; margin-left: 8px; border: 2px solid #005e95; background: #9cccec; padding: 2px; margin-top: -4px; }
.mi { margin: -5px 0 0 6px; } .mi2 { margin: -3px 0 0 11px; } .mi3 { margin: -3px 0 0 7px; } .mi4 { margin: -3px 0 0 8px; } .mi5 { margin-left: 12px; color: #222; }
.mi5 + .sep { margin-left: 17px; }
.coord { margin-left: 595px; width: 316px; padding-top: 6px; }
.cch { color: #444; margin-top: 3px; }
.cch + .sep { margin-left: 595px; }
.selfeat { width: 278px; height: 40px; background: #fff; margin-left: 8px; padding-left: 6px; display: flex; align-items: center; gap: 8px; }
.selfeat span { padding-top: 1px; }
.s2 { margin-left: 8px; }
.s2 + svg { margin-left: 17px; } .s3 { margin-left: 17px; } .s3 + svg { margin-left: 15px; } .s3 + .rf { margin-left: 13px; }

/* select by location */
.dialog { position: absolute; left: 1462px; top: 106px; width: 896px; height: 754px; border: 2px solid #007ac2; border-radius: 18px; background: #f7f9f8; padding: 1px 15px 0 36px; }
.dh { height: 50px; margin-left: -20px; display: grid; grid-template-columns: 782px 57px 20px; align-items: center; color: #777; }
.dh span { font-size: 27.800px; color: #007ac2; letter-spacing: .25px; }
.dh em { font: 600 28px "Open Sans"; color: #808080; margin-top: -3px; }
.dh svg { margin-top: -3px; }
.dl { height: 50px; display: flex; align-items: flex-end; line-height: 29px; }
.l52 { height: 52px; }
.inp { margin-top: 19px; height: 40px; align-items: center; gap: 12px; padding-top: 1px; }
.dr { display: flex; align-items: center; height: 44px; }
.two { margin: 4px 0 0 50px; }
.fld { flex: 1; height: 44px; border: 2px solid #8e8e8e; background: #fff; display: flex; align-items: center; justify-content: space-between; padding: 1px 9px 0 8px; color: #1c1c1c; }
.fld span { padding-top: 3px; }
.fld svg { color: #6a6a6a; }
.grip { width: 10px; height: 44px; background: #ddd; }
.red { margin: 0 11px 0 14px; color: #c9613f; }
.fo { margin: 0 6px 0 13px; }
.f2 { margin-right: 4px; }
.pc { margin: 0 8px 0 20px; } .dkc { color: #333; margin-right: 9px; }
.dist { flex: none; width: 413px; margin-right: 8px; }
.units { padding-left: 2px; color: #4c4c4c; }
.inv { display: flex; align-items: center; margin-top: 20px; height: 28px; }
.inv span { padding-top: 3px; }
.btns { display: flex; justify-content: flex-end; gap: 18px; margin: 57px 2px 0 0; }
.btns span { width: 140px; height: 48px; border: 2px solid #404040; background: #fff; display: flex; align-items: center; justify-content: center; padding-top: 4px; }
.btns .ap { border-color: #0079cc; }

/* attribute tables */
.tables { margin-top: 12px; display: flex; gap: 12px; }
.left { width: 1232px; } .right { width: 1230px; }
.left .tab { width: 294px; } .right .tab { width: 158px; }
.right .tab span { margin-right: 19px; }
.tbody { height: 592px; border: 2px solid #d0d3d8; border-top: 6px solid #d2d3d8; background: #f7f9f8; padding: 2px; }
.tool { height: 60px; border: 2px solid #bec0c4; background: #eef0f2; display: grid; align-items: center; }
.tl { grid-template-columns: 79px 53px 50px 15px 130px repeat(6, 52px) 1fr 28px; padding: 0 14px 0 10px; }
.tr { grid-template-columns: 52px 51px 19px repeat(5, 52px) 51px 19px repeat(7, 52px) 1fr 31px 28px; padding: 0 14px 0 14px; }
.tool svg { width: 32px; height: 32px; }
.tool .ham { width: 28px; height: 26px; margin-top: -3px; }
.tool .ovf { width: 12px; height: 14px; margin-top: 26px; }
.tool strong { font-weight: 700; font-size: 22.700px; letter-spacing: -.45px; padding-top: 3px; }
.off { opacity: .38; }
.vs { width: 2px; height: 44px; background: #d0d2d5; }
.gridbox { margin-top: 2px; height: 466px; border: 2px solid #c4c5c8; }
.gmain { height: 420px; display: flex; background: #fff; overflow: hidden; }
.grid { flex: 1; min-width: 0; overflow: hidden; font-size: 25px; letter-spacing: 0; }
.gr0 { display: grid; height: 57px; }
.left .gr0 { grid-template-columns: 40px 163px 123px 563px 290px; }
.right .gr0 { grid-template-columns: 40px 323px 671px 142px; }
.gr0 > * { border-right: 2px solid #c9c9c9; border-bottom: 2px solid #c9c9c9; display: flex; align-items: center; padding: 2px 0 0 10px; overflow: hidden; }
.gr0 > :last-child { border-right: 0; }
.gr0 > b { background: #ebebeb; font-weight: 400; padding: 2px 4px 0 0; justify-content: center; border-right: 2px solid #d4d4d4; font-size: 23px; border-bottom-color: #d4d4d4; }
.th { height: 58px; }
.th > span { background: #ebebeb; font-weight: 700; font-size: 25.200px; letter-spacing: -.1px; border-right-width: 1px; border-bottom-color: #d4d4d4; }
.th > .act { background: #c7e2f6; border-bottom: 5px solid #007ac2; padding-top: 5px; }
.th > .corner { background: linear-gradient(to bottom right, transparent 50%, #c9c9c9 50%) 8px 26px/24px 24px no-repeat #fff; }
.alt > span { background: #ebebeb; }
.cur > b { background: #c7e2f6; box-shadow: inset -4px 0 #007ac2; border-right-width: 0; margin-right: 1px; }
.gr0 > .actc { background: #c7e2f6; }
.left .add { grid-template-columns: 40px 1fr; height: 56px; }
.add b { border-bottom: 0; }
.right .gr0:not(.th) > span { background: #8cffff; }
.right .gr0:not(.th):not(.cur) > span:nth-child(3) { background: #fff98c; }
.right .gr0 > span:nth-child(3) { border-right-color: #9a9a9a; }
.right .gr0.cur:not(.th) > .actc { background: #c7e2f6; }
.right .add2.gr0:not(.th):not(.cur) > span { background: #fff; font-size: 20px; padding: 0 0 4px 16px; }
.right .gr0.add2 { grid-template-columns: 40px 994px 142px; }
.vsb { width: 41px; background: #ebebeb; display: flex; flex-direction: column; align-items: center; justify-content: space-between; padding: 16px 0 15px; color: #555; }
.vsb.dis { background: #f3f3f3; color: #ccc; }
.up { transform: scaleY(-1); }
.vthumb { width: 22px; height: 303px; border-radius: 11px; background: #b3b3b3; margin-bottom: 26px; }
.hsb { height: 42px; background: #ebebeb; display: flex; align-items: center; padding: 0 56px 0 16px; }
.thumb { height: 22px; border-radius: 11px; background: #b3b3b3; margin: 0 auto 0 15px; width: 814px; }
.right .thumb { width: 534px; }
.foot { height: 54px; display: flex; align-items: center; padding-top: 2px; }
.fb { width: 64px; height: 44px; padding: 8px 0 0 16px; margin-right: 4px; border: 0; }
.fb.on { background: #c0c1c7; border: 3px solid #3daee9; padding: 5px 0 0 13px; }
.n1 { margin: 0 28px 0 14px; } .n2 { margin-right: 26px; }
.cnt { flex: 1; padding-top: 3px; } .fil { width: 77px; padding-top: 3px; }
.clk { width: 84px; height: 48px; background: #eef0f1; display: flex; align-items: center; gap: 12px; padding-left: 8px; }
.ft { margin-left: 8px; }
.foot .sep { margin-left: 4px; } .ud { margin: 0 30px 0 13px; }
.pct { width: 120px; height: 44px; background: #fff; display: flex; align-items: center; justify-content: space-between; padding: 0 10px 0 13px; margin-left: 13px; color: #1c1c1c; }
.pct span { padding-top: 3px; }
.pct svg { color: #555; }
.foot .s4 { margin-left: 10px; } .rf2 { margin: 0 9px 0 14px; }

/* auto-hidden panes */
.dock { margin-left: 14px; width: 49px; display: flex; flex-direction: column; gap: 24px; }
.dock span { writing-mode: vertical-rl; width: 49px; border-right: 11px solid #c0c0c6; display: flex; align-items: center; padding-right: 7px; letter-spacing: -.25px; }
.k1 { height: 81px; } .k2 { height: 156px; } .k3 { height: 121px; } .k4 { height: 172px; } .k5 { height: 116px; } .k6 { height: 171px; }
```
